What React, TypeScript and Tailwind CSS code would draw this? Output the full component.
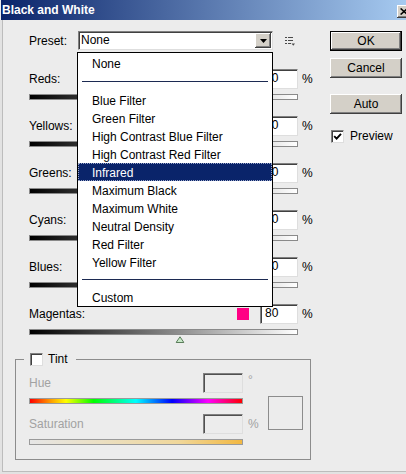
import React from 'react';

type Channel = { name: string; value: number; swatch: string };

const channels: Channel[] = [
  { name: 'Reds', value: 40, swatch: 'bg-[#ff0000]' },
  { name: 'Yellows', value: 60, swatch: 'bg-[#ffff00]' },
  { name: 'Greens', value: 40, swatch: 'bg-[#00ff00]' },
  { name: 'Cyans', value: 60, swatch: 'bg-[#00ffff]' },
  { name: 'Blues', value: 20, swatch: 'bg-[#0000ff]' },
  { name: 'Magentas', value: 80, swatch: 'bg-[#ff0084]' },
];

const presets = [
  'Blue Filter',
  'Green Filter',
  'High Contrast Blue Filter',
  'High Contrast Red Filter',
  'Infrared',
  'Maximum Black',
  'Maximum White',
  'Neutral Density',
  'Red Filter',
  'Yellow Filter',
];

// classic win32 bevels
const sunken =
  'border border-t-[#808080] border-l-[#808080] border-r-[#dedede] border-b-[#dedede] shadow-[inset_1px_1px_0_#404040]';
const raised =
  'bg-[#d4d0c8] shadow-[inset_-1px_-1px_0_#404040,inset_1px_1px_0_#ffffff,inset_-2px_-2px_0_#808080]';

function Checkbox({ checked }: { checked?: boolean }) {
  return (
    <span className={`flex h-[13px] w-[13px] shrink-0 items-center justify-center bg-white ${sunken}`}>
      {checked && (
        <svg width="9" height="9" viewBox="0 0 9 9">
          <path d="M1.2 4.2 L3.6 6.6 L8 1.8" fill="none" stroke="#000" strokeWidth="1.9" />
        </svg>
      )}
    </span>
  );
}

function Button({ label, isDefault }: { label: string; isDefault?: boolean }) {
  return (
    <div
      className={`flex h-[20px] w-[72px] items-center justify-center ${isDefault ? 'border border-black' : ''} ${raised}`}
    >
      {label}
    </div>
  );
}

function Thumb({ value }: { value: number }) {
  const pct = ((value + 200) / 500) * 100;
  return (
    <svg
      className="absolute top-[6px] -translate-x-1/2"
      style={{ left: `${pct}%` }}
      width="9"
      height="7"
      viewBox="0 0 9 7"
    >
      <path d="M4.5 0.8 L8.4 6.5 L0.6 6.5 Z" fill="#c8e8c8" stroke="#5b7d5b" />
    </svg>
  );
}

function ChannelRow({ ch }: { ch: Channel }) {
  return (
    <div className="flex flex-col">
      <div className="flex h-[20px] w-[284px] items-center">
        <span className="flex-1">{ch.name}:</span>
        <span className={`mr-[11px] h-[12px] w-[12px] ${ch.swatch}`} />
        <div className={`h-[20px] w-[38px] bg-white pl-[4px] leading-[17px] ${sunken}`}>{ch.value}</div>
        <span className="ml-[4px] w-[11px]">%</span>
      </div>
      <div className="relative mt-[5px] h-[6px] w-[269px] border border-[#8a8a8a] bg-[linear-gradient(to_right,#000000,#ffffff)]">
        <Thumb value={ch.value} />
      </div>
      <div className="h-[10px]" />
    </div>
  );
}

function PresetMenu() {
  return (
    <div className="absolute left-[77px] top-[52px] flex w-[196px] flex-col border border-black bg-white pt-[1px]">
      <div className="flex h-[18px] items-center pl-[14px] pt-[2px]">None</div>
      <div className="flex h-[19px] items-center px-[4px]">
        <div className="h-px w-full bg-[#1c2a52]" />
      </div>
      {presets.map((p) =>
        p === 'Infrared' ? (
          <div
            key={p}
            className="flex h-[18px] items-center border border-dotted border-[#9aa6c8] bg-[#0a246a] pl-[13px] pt-[1px] text-white"
          >
            {p}
          </div>
        ) : (
          <div key={p} className="flex h-[18px] items-center pl-[14px] pt-[2px]">
            {p}
          </div>
        )
      )}
      <div className="flex h-[17px] items-start px-[4px] pt-[8px]">
        <div className="h-px w-full bg-[#1c2a52]" />
      </div>
      <div className="flex h-[18px] items-center pl-[14px] pt-[2px]">Custom</div>
    </div>
  );
}

export default function App() {
  return (
    <div className="relative flex h-[474px] w-[406px] flex-col overflow-hidden bg-[#ececec] font-['Liberation_Sans',Arial,sans-serif] text-[12px] leading-[14px] text-black">
      {/* title bar */}
      <div className="ml-[1px] flex h-[20px] shrink-0 items-start justify-between overflow-hidden bg-[linear-gradient(to_right,#0a246a,#a6caf0)] pl-[1px]">
        <span className="mt-[3px] font-bold text-white">Black and White</span>
        <div className={`-mr-[7px] mt-[5px] flex h-[13px] w-[16px] items-center justify-start pl-[3px] ${raised}`}>
          <svg width="8" height="7" viewBox="0 0 8 7">
            <path d="M0.6 0.5 L7.4 6.5 M7.4 0.5 L0.6 6.5" stroke="#000" strokeWidth="1.6" />
          </svg>
        </div>
      </div>

      <div className="flex flex-1 border-b-[2px] border-l-[2px] border-[#e2e2e2]">
        <div className="flex flex-1 border-b border-l border-[#bcbcbc] pl-[12px] pt-[11px]">
          {/* left column */}
          <div className="flex w-[298px] flex-col">
            <div className="flex flex-col pl-[14px]">
              <div className="flex h-[19px] items-center">
                <span className="w-[49px]">Preset:</span>
                <div className={`flex h-[19px] w-[195px] items-center justify-between bg-white pl-[2px] ${sunken}`}>
                  <span className="leading-[15px]">None</span>
                  <div className={`mr-[1px] flex h-[15px] w-[16px] items-center justify-center ${raised}`}>
                    <svg width="7" height="4" viewBox="0 0 7 4">
                      <path d="M0 0 L7 0 L3.5 4 Z" fill="#000" />
                    </svg>
                  </div>
                </div>
                <svg className="ml-[12px] mt-[2px]" width="10" height="9" viewBox="0 0 10 9">
                  <rect x="0" y="0" width="2" height="1" fill="#4a4a4a" />
                  <rect x="3" y="0" width="5" height="1" fill="#4a4a4a" />
                  <rect x="0" y="3" width="2" height="1" fill="#4a4a4a" />
                  <rect x="3" y="3" width="5" height="1" fill="#4a4a4a" />
                  <rect x="0" y="6" width="2" height="1" fill="#4a4a4a" />
                  <rect x="3" y="6" width="3" height="1" fill="#4a4a4a" />
                  <path d="M6.5 6.5 L10 6.5 L8.25 8.8 Z" fill="#4a4a4a" />
                </svg>
              </div>

              <div className="mt-[19px] flex flex-col gap-[6px]">
                {channels.map((ch) => (
                  <ChannelRow key={ch.name} ch={ch} />
                ))}
              </div>
            </div>

            {/* Tint group */}
            <fieldset className="mt-[7px] w-[296px] border border-[#8c8c8c] pb-[14px]">
              <legend className="ml-[8px] flex h-[14px] items-center pl-[6px] pr-[8px]">
                <Checkbox />
                <span className="ml-[5px]">Tint</span>
              </legend>
              <div className="flex pl-[13px] pt-[7px]">
                <div className="flex w-[239px] flex-col">
                  <div className="flex h-[20px] items-center">
                    <span className="w-[174px] text-[#a2a2a2]">Hue</span>
                    <div className={`h-[20px] w-[40px] ${sunken} bg-transparent shadow-[inset_1px_1px_0_#505050]`} />
                    <span className="mb-[6px] ml-[5px] text-[#a2a2a2]">°</span>
                  </div>
                  <div className="mt-[5px] h-[6px] w-[214px] border border-[#9a9a9a] bg-[linear-gradient(to_right,#ff0000,#ffa000_10%,#ffff00_17%,#00ff00_30%,#00ffff_50%,#0000ff_67%,#ff00ff_84%,#ff0000)]" />
                  <div className="mt-[10px] flex h-[20px] items-center">
                    <span className="w-[174px] text-[#a2a2a2]">Saturation</span>
                    <div className={`h-[20px] w-[40px] ${sunken} bg-transparent shadow-[inset_1px_1px_0_#505050]`} />
                    <span className="ml-[5px] text-[#a2a2a2]">%</span>
                  </div>
                  <div className="mt-[5px] h-[6px] w-[214px] border border-[#9a9a9a] bg-[linear-gradient(to_right,#e6e6e6,#f0d79a_70%,#f2b842)]" />
                </div>
                <div className="mt-[23px] h-[34px] w-[35px] border border-[#8c8c8c]" />
              </div>
            </fieldset>
          </div>

          {/* right column */}
          <div className="ml-[17px] flex w-[72px] flex-col">
            <Button label="OK" isDefault />
            <div className="mt-[7px]">
              <Button label="Cancel" />
            </div>
            <div className="mt-[16px]">
              <Button label="Auto" />
            </div>
            <div className="mt-[15px] flex items-center pl-[1px]">
              <Checkbox checked />
              <span className="ml-[6px]">Preview</span>
            </div>
          </div>
        </div>
      </div>

      <PresetMenu />
    </div>
  );
}
